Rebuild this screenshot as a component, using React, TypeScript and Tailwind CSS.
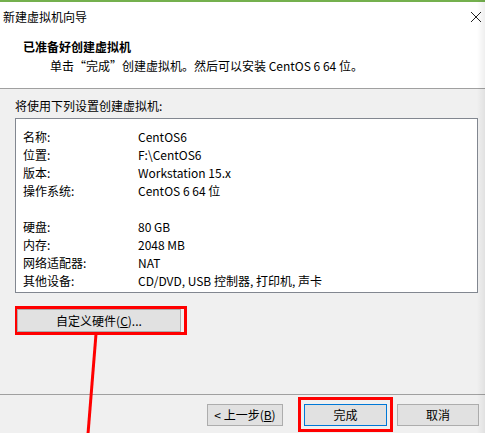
import React from "react";

const rows: [string, string][] = [
  ["名称:", "CentOS6"],
  ["位置:", "F:\\CentOS6"],
  ["版本:", "Workstation 15.x"],
  ["操作系统:", "CentOS 6 64 位"],
  ["", ""],
  ["硬盘:", "80 GB"],
  ["内存:", "2048 MB"],
  ["网络适配器:", "NAT"],
  ["其他设备:", "CD/DVD, USB 控制器, 打印机, 声卡"],
];

export default function App() {
  return (
    <div
      className="relative w-[485px] h-[433px] overflow-hidden bg-[#f0f0f0] text-[12px] text-black"
      style={{ fontFamily: '"Noto Sans CJK SC", "Noto Sans", sans-serif' }}
    >
      <div className="h-[2px] bg-[#74b04e]" />
      {/* header */}
      <div className="h-[87px] bg-white border-b border-[#a0a0a0] flex flex-col">
        <div className="h-[30px] flex items-center justify-between pl-[3px] pr-[3px]">
          <span className="leading-none">新建虚拟机向导</span>
          <svg width="12" height="12" viewBox="0 0 12 12">
            <path d="M1 1 L11 11 M11 1 L1 11" stroke="#222" strokeWidth="1" fill="none" />
          </svg>
        </div>
        <div className="pl-[23px] mt-[6px] font-bold leading-[18px]">已准备好创建虚拟机</div>
        <div className="pl-[50px] mt-[1px] leading-[18px]">单击“完成”创建虚拟机。然后可以安装 CentOS 6 64 位。</div>
      </div>
      {/* body */}
      <div className="pl-[15px] pr-[7px] pt-[8px]">
        <div className="leading-[18px]">将使用下列设置创建虚拟机:</div>
        <div className="mt-[3px] h-[175px] bg-white border border-[#828790] pt-[9px] pl-[7px]">
          {rows.map(([k, v], i) => (
            <div key={i} className="flex h-[18px] items-center leading-none">
              <span className="w-[115px]">{k}</span>
              <span>{v}</span>
            </div>
          ))}
        </div>
        <div className="mt-[13px] w-[172px] h-[29px] border-[3px] border-[#ff0000] flex items-center">
          <div className="-ml-[1px] w-[164px] h-[23px] bg-[#e1e1e1] border border-[#adadad] flex items-center justify-center leading-none">
            自定义硬件(<span className="underline">C</span>)...
          </div>
        </div>
      </div>
      <div className="mt-[59px] border-t border-[#a0a0a0]" />
      <div className="flex items-center pl-[207px] mt-[2px]">
        <div className="w-[76px] h-[22px] bg-[#e1e1e1] border border-[#adadad] flex items-center justify-center leading-none">
          &lt; 上一步(<span className="underline">B</span>)
        </div>
        <div className="ml-[15px] w-[95px] h-[35px] border-[3px] border-[#ff0000] flex items-center justify-center">
          <div className="w-[83px] h-[22px] bg-[#e1e1e1] border border-[#0078d7] flex items-center justify-center leading-none">
            完成
          </div>
        </div>
        <div className="ml-[4px] w-[82px] h-[22px] bg-[#e1e1e1] border border-[#adadad] flex items-center justify-center leading-none">
          取消
        </div>
      </div>
      <div className="absolute top-0 right-0 w-[8px] h-full bg-gradient-to-r from-transparent to-[#00000010]" />
      <svg className="absolute left-0 top-0" width="485" height="433">
        <line x1="96" y1="334" x2="88" y2="434" stroke="#ff0000" strokeWidth="3" />
      </svg>
    </div>
  );
}
